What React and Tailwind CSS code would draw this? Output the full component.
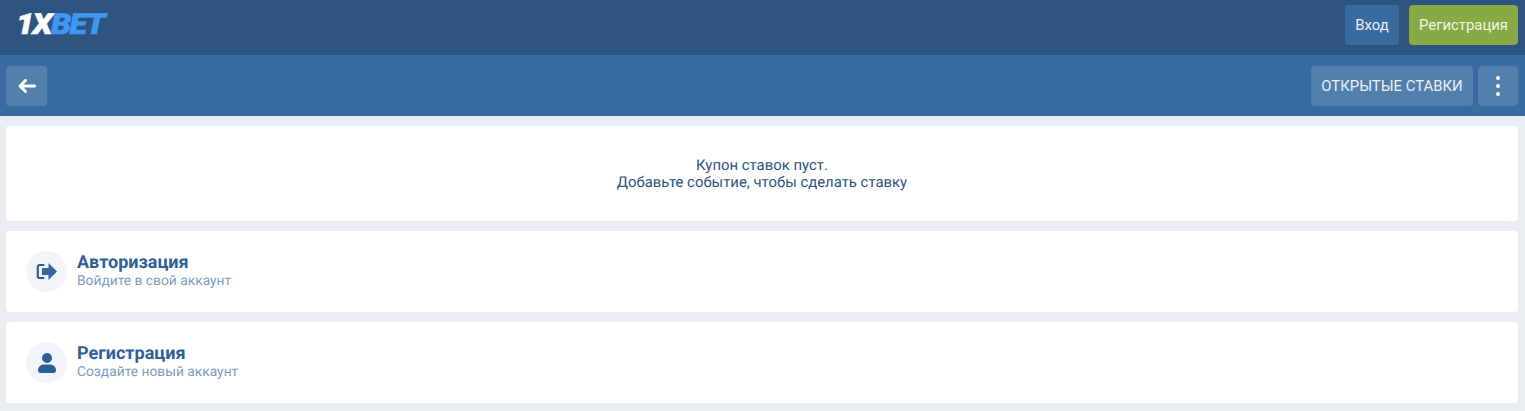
function BackIcon() {
  return (
    <svg width="18" height="14" viewBox="0 0 18 14" fill="none" stroke="#fff" strokeWidth="3" strokeLinecap="round" strokeLinejoin="round">
      <path d="M16.500 7H2M7.500 1.500 2 7l5.500 5.500" />
    </svg>
  );
}

function LoginIcon() {
  return (
    <svg width="21" height="19" viewBox="0 0 21 19" fill="none">
      <path d="M7.500 3H3.500A1.700 1.700 0 0 0 1.800 4.700v9.600A1.700 1.700 0 0 0 3.500 16h4" stroke="#2f5f97" strokeWidth="2.200" strokeLinecap="round" />
      <path d="M6 6h6.500V1L21 9.500 12.500 18v-5H6z" fill="#38689f" />
    </svg>
  );
}

function UserIcon() {
  return (
    <svg width="18" height="20" viewBox="0 0 18 20" fill="#2f5f97">
      <circle cx="9" cy="5" r="5" />
      <path d="M0 17.500C0 13.500 3 11.500 6 11.500h6c3 0 6 2 6 6 0 1.500-1 2.500-2.500 2.500h-13C1 20 0 19 0 17.500z" />
    </svg>
  );
}

function ActionCard({ icon, title, subtitle }) {
  return (
    <div className="flex h-[81px] items-center gap-[10px] rounded-[4px] bg-white pl-5">
      <div className="flex h-[41px] w-[41px] items-center justify-center rounded-full bg-[#f1f5fa]">{icon}</div>
      <div className="flex flex-col gap-[1px] pb-[1px]">
        <div className="text-[18px] leading-[18px] font-bold text-[#2f5f97]">{title}</div>
        <div className="text-[13.8px] leading-[16px] text-[#7e9dbf]">{subtitle}</div>
      </div>
    </div>
  );
}

export default function App() {
  return (
    <div className="h-[411px] overflow-hidden bg-[#e9edf2] font-['Roboto',sans-serif] [text-rendering:geometricPrecision]">
      <header className="flex h-[55px] items-start justify-between bg-[#2e5480] pt-[5px] pr-[7px] pl-[16px]">
        <div className="mt-[6px] origin-left scale-x-[1.11] text-[29px] leading-none font-black tracking-[-1.4px] italic [-webkit-text-stroke:0.6px_currentColor]">
          <span className="text-white">1X</span>
          <span className="text-[#3f97f4]">BET</span>
        </div>
        <div className="flex gap-[10px]">
          <button className="h-10 w-[54px] rounded-[4px] bg-[#386ba0] text-[14.9px] text-[#e9eff6]">Вход</button>
          <button className="h-10 w-[109px] rounded-[4px] bg-[#88aa45] text-[14.9px] text-[#f0f5e4]">Регистрация</button>
        </div>
      </header>

      <div className="flex h-[61px] items-start justify-between bg-[#386ba0] pt-[11px] pr-[7px] pl-[6px]">
        <button className="flex h-10 w-[41px] items-center justify-center rounded-[4px] bg-[#5280ad]">
          <BackIcon />
        </button>
        <div className="flex gap-[5px]">
          <button className="h-10 w-[162px] rounded-[4px] bg-[#5280ad] text-[14.9px] text-[#e9eff6]">ОТКРЫТЫЕ СТАВКИ</button>
          <button className="flex h-10 w-10 flex-col items-center justify-center gap-[4px] rounded-[4px] bg-[#5280ad]">
            <span className="h-1 w-1 rounded-full bg-white" />
            <span className="h-1 w-1 rounded-full bg-white" />
            <span className="h-1 w-1 rounded-full bg-white" />
          </button>
        </div>
      </div>

      <main className="flex flex-col gap-[10px] pt-[10px] pr-[7px] pl-[6px]">
        <div className="flex h-[95px] flex-col items-center justify-center rounded-[4px] bg-white text-center text-[14.9px] leading-[17px] text-[#2e5480]">
          <div>Купон ставок пуст.</div>
          <div>Добавьте событие, чтобы сделать ставку</div>
        </div>
        <ActionCard icon={<LoginIcon />} title="Авторизация" subtitle="Войдите в свой аккаунт" />
        <ActionCard icon={<UserIcon />} title="Регистрация" subtitle="Создайте новый аккаунт" />
      </main>
    </div>
  );
}
